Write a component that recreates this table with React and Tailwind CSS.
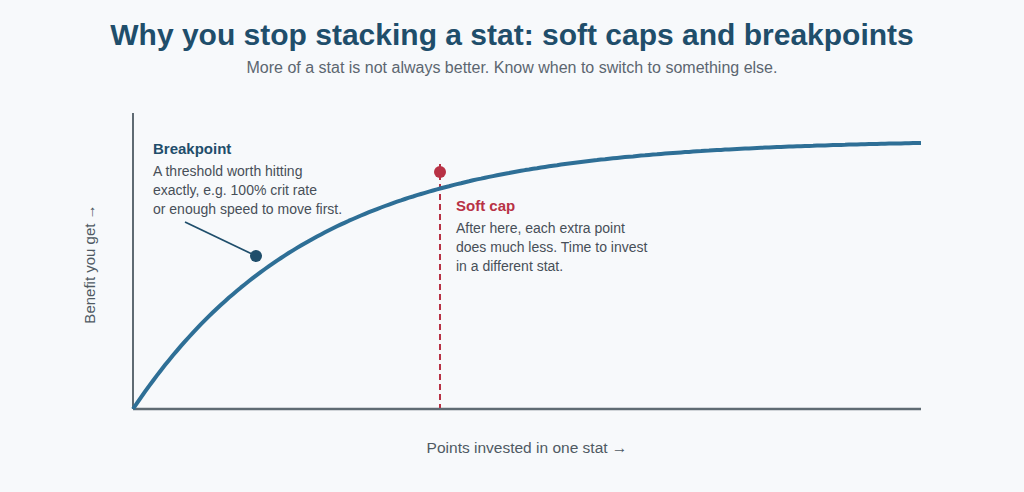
import React from "react";

// saturating curve, sampled from the reference
const curvePoints = () => {
  const pts = [];
  for (let x = 133; x <= 921; x += 4) {
    const y = 409 - 269.4 * (1 - Math.exp(-(x - 133) / 180));
    pts.push(`${x},${y.toFixed(1)}`);
  }
  return pts.join(" ");
};

const Chart = () => (
  <svg
    width="1024"
    height="402"
    viewBox="0 90 1024 402"
    className="block"
    style={{ fontFamily: '"Liberation Sans", Arial, sans-serif' }}
  >
    {/* axes */}
    <line x1="133" y1="113" x2="133" y2="409" stroke="#5f6b73" strokeWidth="2" />
    <line x1="133" y1="409" x2="921" y2="409" stroke="#5f6b73" strokeWidth="2.5" />

    {/* soft cap marker */}
    <line
      x1="440"
      y1="164"
      x2="440"
      y2="408"
      stroke="#b83245"
      strokeWidth="2"
      strokeDasharray="6 4"
    />
    <circle cx="440" cy="172" r="6" fill="#b83245" />

    {/* curve */}
    <polyline
      points={curvePoints()}
      fill="none"
      stroke="#2e6f96"
      strokeWidth="4"
      strokeLinecap="butt"
      strokeLinejoin="round"
    />

    {/* breakpoint leader */}
    <line x1="185" y1="222" x2="252" y2="254" stroke="#1f4e6b" strokeWidth="1.8" />
    <circle cx="256" cy="256" r="6" fill="#1f4e6b" />

    <text x="153" y="154" fontSize="15" fontWeight="700" fill="#1f4e6b">
      Breakpoint
    </text>
    <g fontSize="14" fill="#474f58">
      <text x="153" y="176">A threshold worth hitting</text>
      <text x="153" y="195">exactly, e.g. 100% crit rate</text>
      <text x="153" y="214">or enough speed to move first.</text>
    </g>

    <text x="456" y="211" fontSize="15" fontWeight="700" fill="#b83245">
      Soft cap
    </text>
    <g fontSize="14" fill="#474f58">
      <text x="456" y="233">After here, each extra point</text>
      <text x="456" y="252">does much less. Time to invest</text>
      <text x="456" y="271">in a different stat.</text>
    </g>

    <text
      x="527"
      y="453"
      fontSize="15.5"
      fill="#4f5a63"
      textAnchor="middle"
    >
      Points invested in one stat →
    </text>
    <text
      x="0"
      y="0"
      fontSize="15"
      fill="#4f5a63"
      textAnchor="middle"
      transform="translate(95 264) rotate(-90)"
    >
      Benefit you get →
    </text>
  </svg>
);

export default function App() {
  return (
    <div className="w-[1024px] h-[492px] overflow-hidden bg-[#f7f9fb] font-['Liberation_Sans',Arial,sans-serif] flex flex-col">
      <div className="flex flex-col items-center pt-[17px] h-[90px]">
        <h1 className="text-[30px] leading-[36px] font-bold text-[#1f4e6b]">
          Why you stop stacking a stat: soft caps and breakpoints
        </h1>
        <p className="mt-[5px] text-[16px] leading-[20px] text-[#5c6670]">
          More of a stat is not always better. Know when to switch to something else.
        </p>
      </div>
      <Chart />
    </div>
  );
}
